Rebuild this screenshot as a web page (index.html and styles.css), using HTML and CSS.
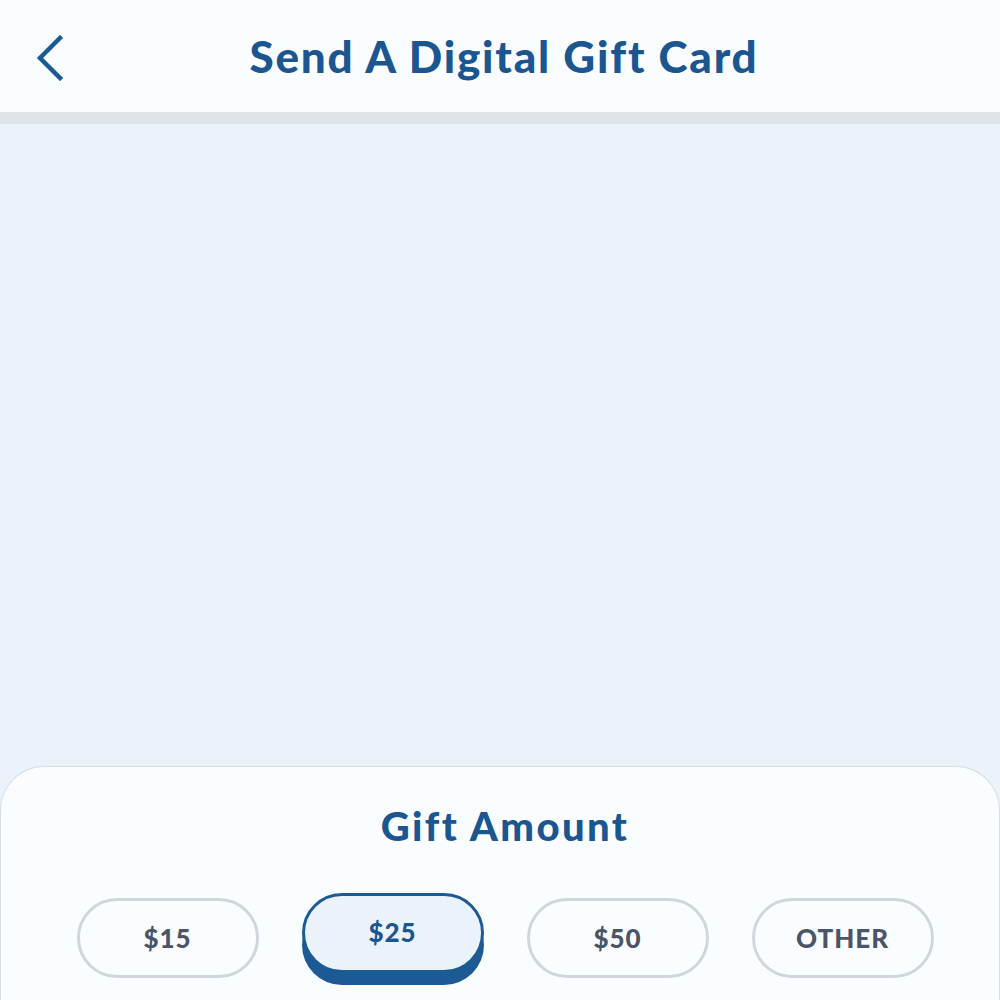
FILE: index.html
```html
<!DOCTYPE html>
<html lang="en">
<head>
    <meta charset="UTF-8">
    <meta name="viewport" content="width=device-width, initial-scale=1.0">
    <title>Send A Digital Gift Card</title>
    <link rel="stylesheet" href="styles.css">
</head>
<body>
    <div class="page">
        <header class="top-bar">
            <button class="back-btn" aria-label="Back">
                <svg width="30" height="46" viewBox="0 0 30 46">
                    <polyline points="25,3 5,23 25,43" fill="none" stroke="#1b5a94" stroke-width="4.5" stroke-linecap="square"/>
                </svg>
            </button>
            <h1>Send A Digital Gift Card</h1>
        </header>
        <div class="divider"></div>
        <main class="preview"></main>
        <section class="sheet">
            <h2>Gift Amount</h2>
            <div class="amounts">
                <button class="amount-btn">$15</button>
                <button class="amount-btn selected">$25</button>
                <button class="amount-btn">$50</button>
                <button class="amount-btn">OTHER</button>
            </div>
        </section>
    </div>
</body>
</html>
```

FILE: styles.css
```css
body {
    margin: 0;
    padding: 0;
    font-family: Lato, "Open Sans", Arial, sans-serif;
    background-color: #ebf3fa;
}

.page {
    width: 1000px;
    height: 1000px;
    display: flex;
    flex-direction: column;
    overflow: hidden;
}

.top-bar {
    height: 112px;
    background-color: #fafdff;
    display: flex;
    align-items: center;
    justify-content: center;
    position: relative;
}

.back-btn {
    position: absolute;
    left: 35px;
    top: 35px;
    background: none;
    border: none;
    padding: 0;
    cursor: pointer;
}

h1 {
    margin: 0 0 0 8px;
    font-size: 44px;
    font-weight: 900;
    color: #1b5690;
    letter-spacing: 1.8px;
}

.divider {
    height: 12px;
    background-color: #dfe4e8;
}

.preview {
    flex: 1;
    background-color: #ebf3fa;
}

.sheet {
    height: 234px;
    background-color: #fafdff;
    border: 1.5px solid #d5dde5;
    border-bottom: none;
    border-radius: 44px 44px 0 0;
    display: flex;
    flex-direction: column;
    align-items: center;
    box-sizing: border-box;
}

h2 {
    margin: 37px 0 0 10px;
    font-size: 40px;
    font-weight: 900;
    color: #1b5690;
    line-height: 44px;
    letter-spacing: 2.4px;
}

.amounts {
    display: flex;
    gap: 43px;
    margin-top: 50px;
    margin-left: 10px;
    align-items: flex-start;
}

.amount-btn {
    width: 182px;
    height: 80px;
    border: 3px solid #d0d6de;
    border-radius: 40px;
    background-color: #fafdff;
    color: #4a5567;
    font-family: Lato, "Open Sans", Arial, sans-serif;
    font-size: 26px;
    font-weight: 900;
    letter-spacing: 1px;
    cursor: pointer;
}

.amount-btn.selected {
    margin-top: -5px;
    height: 80px;
    border: 3px solid #1b5a94;
    background-color: #ebf3fa;
    color: #1b5690;
    padding-bottom: 4px;
    box-shadow: 0 12px 0 #1b5a94;
}
```
